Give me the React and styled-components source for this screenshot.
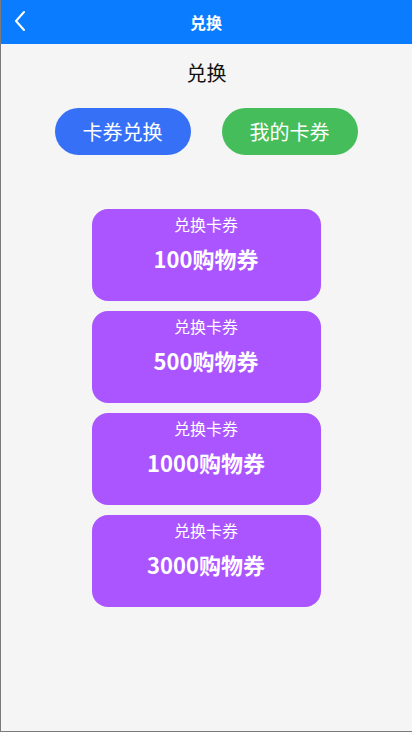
import React from "react";
import styled, { createGlobalStyle } from "styled-components";

const Global = createGlobalStyle`
  html, body { margin: 0; padding: 0; background: #f5f5f5; }
  body { font-family: "Noto Sans CJK SC", "Noto Sans", sans-serif; }
  * { box-sizing: border-box; }
`;

const Page = styled.div`
  width: 412px;
  height: 732px;
  display: flex;
  flex-direction: column;
  background: #f5f5f5;
  border-left: 1px solid #7a7a7a;
  border-bottom: 1px solid #7a7a7a;
  overflow: hidden;
`;

const NavBar = styled.header`
  position: relative;
  height: 44px;
  margin-left: -1px;
  background: #0a7cff;
  display: flex;
  align-items: center;
  justify-content: center;
  flex-shrink: 0;
`;

const BackButton = styled.button`
  position: absolute;
  left: 8px;
  top: 9px;
  width: 24px;
  height: 24px;
  padding: 0;
  border: 0;
  background: transparent;
  display: flex;
  align-items: center;
  justify-content: center;
`;

const NavTitle = styled.h1`
  margin: 0;
  color: #fff;
  font-size: 16px;
  font-weight: 700;
`;

const Heading = styled.h2`
  margin: 14px 0 0;
  text-align: center;
  font-size: 20px;
  font-weight: 400;
  line-height: 30px;
  color: #111;
`;

const TabRow = styled.div`
  display: flex;
  justify-content: center;
  gap: 31px;
  margin-top: 20px;
  padding-right: 1px;
`;

const Pill = styled.button`
  width: 136px;
  height: 47px;
  border: 0;
  border-radius: 24px;
  background: ${(p) => p.$bg};
  color: #fff;
  font-family: inherit;
  font-size: 20px;
  font-weight: 400;
`;

const CardList = styled.div`
  display: flex;
  flex-direction: column;
  align-items: center;
  gap: 10px;
  margin-top: 54px;
  padding-right: 1px;
`;

const Card = styled.div`
  width: 229px;
  height: 92px;
  border-radius: 16px;
  background: #aa55ff;
  color: #fff;
  display: flex;
  flex-direction: column;
  align-items: center;
  padding-top: 4px;
`;

const CardLabel = styled.div`
  font-size: 16px;
  line-height: 22px;
`;

const CardValue = styled.div`
  margin-top: 7px;
  font-size: 22px;
  font-weight: 700;
  line-height: 32px;
`;

const cards = ["100购物券", "500购物券", "1000购物券", "3000购物券"];

export default function App() {
  return (
    <>
      <Global />
      <Page>
        <NavBar>
          <BackButton aria-label="back">
            <svg width="14" height="22" viewBox="0 0 14 22" fill="none">
              <path d="M11 2 L3 11 L11 20" stroke="#fff" strokeWidth="2" strokeLinecap="round" strokeLinejoin="round" />
            </svg>
          </BackButton>
          <NavTitle>兑换</NavTitle>
        </NavBar>
        <Heading>兑换</Heading>
        <TabRow>
          <Pill $bg="#3670f6">卡券兑换</Pill>
          <Pill $bg="#45bd5b">我的卡券</Pill>
        </TabRow>
        <CardList>
          {cards.map((c) => (
            <Card key={c}>
              <CardLabel>兑换卡券</CardLabel>
              <CardValue>{c}</CardValue>
            </Card>
          ))}
        </CardList>
      </Page>
    </>
  );
}
